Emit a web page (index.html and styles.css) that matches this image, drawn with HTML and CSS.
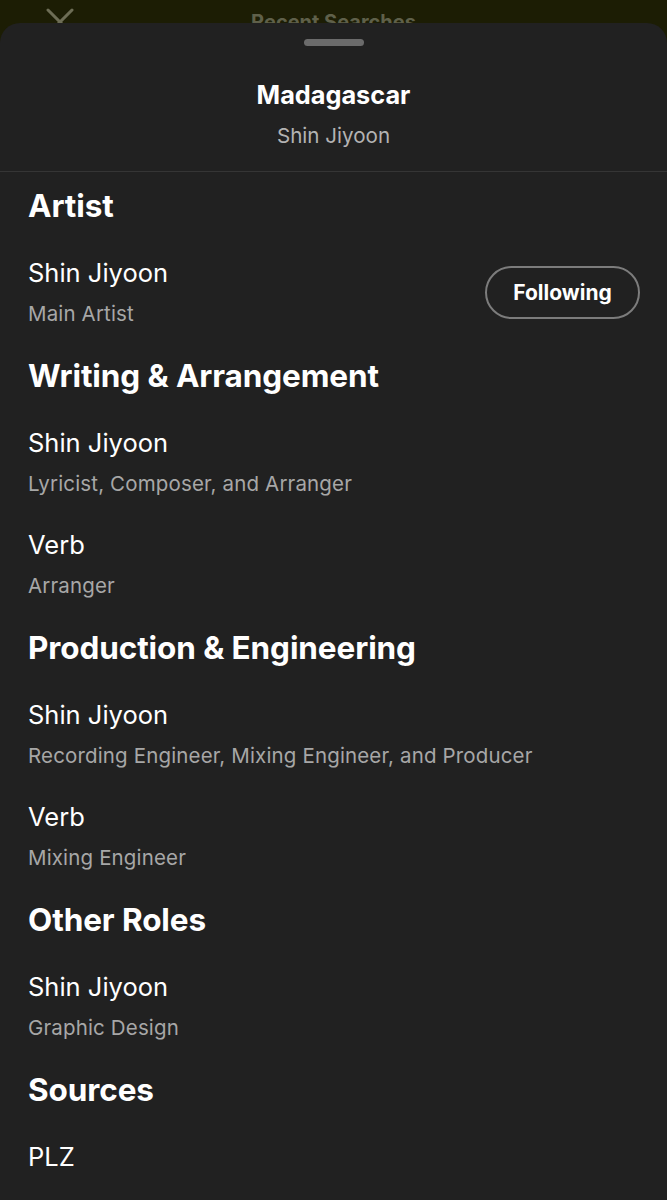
FILE: index.html
```html
<!DOCTYPE html>
<html lang="en">
<head>
<meta charset="UTF-8" />
<meta name="viewport" content="width=device-width, initial-scale=1" />
<title>Song Credits - Madagascar</title>
<link rel="stylesheet" href="styles.css">
</head>
<body>
  <header class="topbar" aria-hidden="true">
    <div class="topbar-inner">
      <svg class="close-icon" width="32" height="32" viewBox="0 0 32 32">
        <path d="M4 4 L28 28 M28 4 L4 28" stroke="#6d6d55" stroke-width="3" stroke-linecap="round" fill="none" />
      </svg>
      <span class="topbar-title">Recent Searches</span>
      <span class="dots"><i></i><i></i><i></i></span>
    </div>
  </header>

  <main class="sheet" aria-label="Song credits">
    <div class="handle"></div>
    <div class="sheet-head">
      <h1>Madagascar</h1>
      <p>Shin Jiyoon</p>
    </div>

    <section class="group">
      <h2>Artist</h2>
      <div class="credit">
        <div class="credit-text">
          <span class="name">Shin Jiyoon</span>
          <span class="role">Main Artist</span>
        </div>
        <button type="button" class="follow-btn">Following</button>
      </div>
    </section>

    <section class="group">
      <h2>Writing &amp; Arrangement</h2>
      <div class="credit">
        <div class="credit-text">
          <span class="name">Shin Jiyoon</span>
          <span class="role">Lyricist, Composer, and Arranger</span>
        </div>
      </div>
      <div class="credit">
        <div class="credit-text">
          <span class="name">Verb</span>
          <span class="role">Arranger</span>
        </div>
      </div>
    </section>

    <section class="group">
      <h2>Production &amp; Engineering</h2>
      <div class="credit">
        <div class="credit-text">
          <span class="name">Shin Jiyoon</span>
          <span class="role">Recording Engineer, Mixing Engineer, and Producer</span>
        </div>
      </div>
      <div class="credit">
        <div class="credit-text">
          <span class="name">Verb</span>
          <span class="role">Mixing Engineer</span>
        </div>
      </div>
    </section>

    <section class="group">
      <h2>Other Roles</h2>
      <div class="credit">
        <div class="credit-text">
          <span class="name">Shin Jiyoon</span>
          <span class="role">Graphic Design</span>
        </div>
      </div>
    </section>

    <section class="group">
      <h2>Sources</h2>
      <div class="credit">
        <div class="credit-text">
          <span class="name">PLZ</span>
        </div>
      </div>
    </section>
  </main>
</body>
</html>
```

FILE: styles.css
```css
* {
  box-sizing: border-box;
}
html, body {
  margin: 0;
  padding: 0;
  background-color: #1c1d04;
  font-family: Inter, Lato, sans-serif;
  color: #ffffff;
}

.topbar {
  height: 23px;
  overflow: hidden;
}
.topbar-inner {
  display: flex;
  align-items: center;
  justify-content: space-between;
  padding: 6px 44px 0 44px;
}
.close-icon {
  display: block;
}
.topbar-title {
  font-size: 20px;
  font-weight: 700;
  color: #5f604a;
}
.dots {
  display: flex;
  gap: 7px;
  padding-top: 14px;
}
.dots i {
  width: 6px;
  height: 6px;
  border-radius: 50%;
  background-color: #6d6d5c;
}

.sheet {
  background-color: #212121;
  border-radius: 20px 20px 0 0;
  min-height: 1177px;
  padding-top: 16px;
}

.handle {
  width: 60px;
  height: 7px;
  border-radius: 4px;
  background-color: #6b6b6b;
  margin: 0 auto;
}

.sheet-head {
  text-align: center;
  padding: 33px 20px 23px;
  border-bottom: 1px solid #353535;
}
.sheet-head h1 {
  margin: 0;
  font-size: 25.3px;
  line-height: 32px;
  font-weight: 700;
}
.sheet-head p {
  margin: 13px 0 0;
  font-size: 20.6px;
  line-height: 24px;
  color: #b3b3b3;
}

.group {
  padding: 32px 27px 0 28px;
}
.group:first-of-type {
  padding-top: 16px;
}
.group h2 {
  margin: 0;
  font-size: 31.5px;
  line-height: 36px;
  font-weight: 700;
  letter-spacing: -0.1px;
}

.credit {
  display: flex;
  align-items: center;
  justify-content: space-between;
  padding-top: 34px;
}
.credit-text {
  display: flex;
  flex-direction: column;
  gap: 14px;
}
.name {
  font-size: 25.5px;
  line-height: 30px;
}
.role {
  font-size: 20.5px;
  line-height: 24px;
  color: #a7a7a7;
  letter-spacing: 0.15px;
}

.follow-btn {
  width: 155px;
  height: 53px;
  border: 2px solid #7c7c7c;
  border-radius: 27px;
  background: transparent;
  color: #ffffff;
  font-family: inherit;
  font-size: 21px;
  font-weight: 700;
  cursor: pointer;
}
```
